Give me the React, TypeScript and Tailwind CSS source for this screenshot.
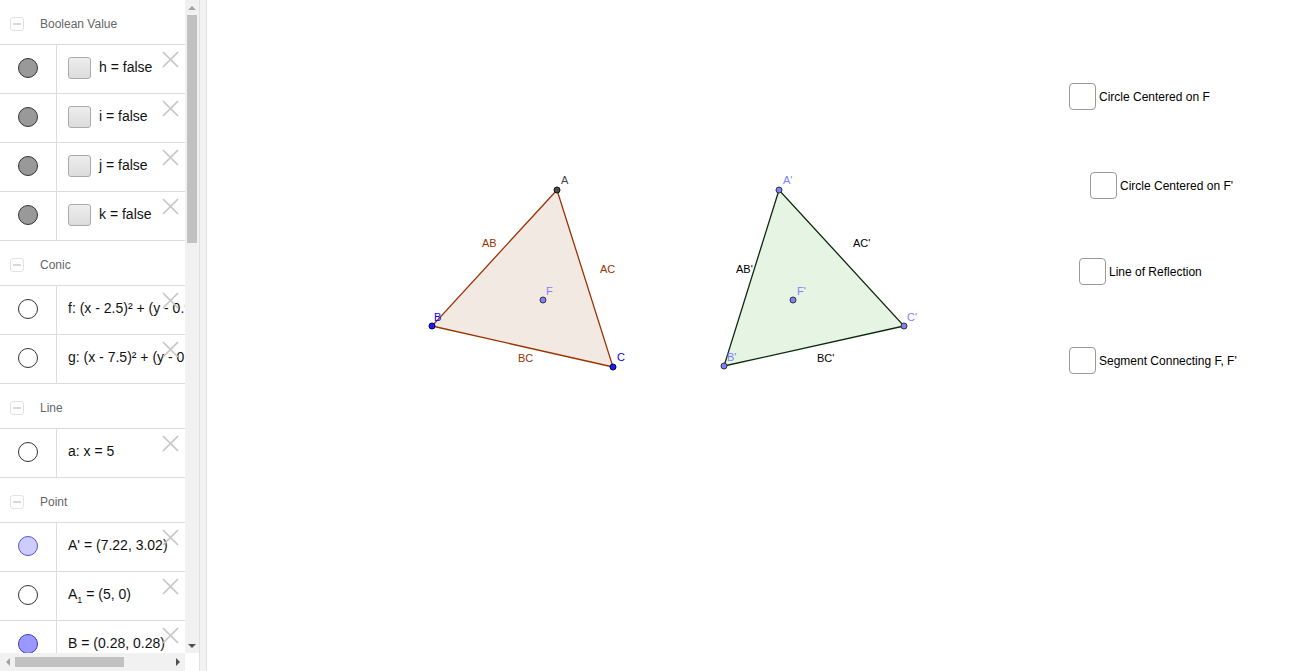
import React from "react";

type Row = {
  kind: "bool" | "open" | "point";
  fill?: string;
  stroke?: string;
  content: React.ReactNode;
};

type Group = { title: string; rows: Row[] };

const groups: Group[] = [
  {
    title: "Boolean Value",
    rows: [
      { kind: "bool", content: "h = false" },
      { kind: "bool", content: "i = false" },
      { kind: "bool", content: "j = false" },
      { kind: "bool", content: "k = false" },
    ],
  },
  {
    title: "Conic",
    rows: [
      { kind: "open", content: "f: (x - 2.5)² + (y - 0.9)² = 0.01" },
      { kind: "open", content: "g: (x - 7.5)² + (y - 0.9)² = 0.01" },
    ],
  },
  {
    title: "Line",
    rows: [{ kind: "open", content: "a: x = 5" }],
  },
  {
    title: "Point",
    rows: [
      { kind: "point", fill: "#ccccff", stroke: "#5555cc", content: "A' = (7.22, 3.02)" },
      {
        kind: "open",
        content: (
          <>
            A<sub className="text-[9px] align-[-2px]">1</sub> = (5, 0)
          </>
        ),
      },
      { kind: "point", fill: "#9999ff", stroke: "#3a3acc", content: "B = (0.28, 0.28)" },
    ],
  },
];

function DeleteX() {
  return (
    <svg className="absolute right-[6px] top-[6px]" width="17" height="17" viewBox="0 0 17 17">
      <path d="M1 1L16 16M16 1L1 16" stroke="#c4c4c4" strokeWidth="1.6" />
    </svg>
  );
}

function Marble({ row }: { row: Row }) {
  if (row.kind === "bool")
    return <div className="w-[20px] h-[20px] rounded-full bg-[#999999] border border-[#333]" />;
  if (row.kind === "point")
    return (
      <div
        className="w-[20px] h-[20px] rounded-full border"
        style={{ background: row.fill, borderColor: row.stroke }}
      />
    );
  return <div className="w-[20px] h-[20px] rounded-full bg-white border border-[#333]" />;
}

function AlgebraRow({ row }: { row: Row }) {
  return (
    <div className="flex h-[49px] border-t border-[#dcdcdc] bg-white">
      <div className="w-[57px] shrink-0 flex items-center justify-center border-r border-[#dcdcdc] pb-[2px]">
        <Marble row={row} />
      </div>
      <div className="relative flex-1 flex items-center pl-[11px] pb-[3px] overflow-hidden whitespace-nowrap text-[14px] text-[#111]">
        {row.kind === "bool" && (
          <div className="w-[23px] h-[22px] mr-[8px] shrink-0 rounded-[3px] border border-[#aaaaaa] bg-gradient-to-b from-[#eeeeee] to-[#dcdcdc]" />
        )}
        <span>{row.content}</span>
        <DeleteX />
      </div>
    </div>
  );
}

function GroupHeader({ title }: { title: string }) {
  return (
    <div className="h-[44px] flex items-center pl-[10px] pt-[3px] bg-white">
      <div className="w-[14px] h-[14px] rounded-[3px] border border-[#e2e2e2] flex items-center justify-center">
        <div className="w-[8px] h-[2px] bg-[#d8d8d8]" />
      </div>
      <span className="ml-[16px] text-[12px] text-[#666]">{title}</span>
    </div>
  );
}

function CanvasCheck({ left, top, label }: { left: number; top: number; label: string }) {
  return (
    <div className="absolute flex items-center" style={{ left, top }}>
      <div className="w-[27px] h-[27px] rounded-[4px] border border-[#999] bg-white" />
      <span className="ml-[3px] text-[12px] leading-none pt-[1px] text-black">{label}</span>
    </div>
  );
}

function Geometry() {
  return (
    <svg
      className="absolute left-0 top-0 font-['Liberation_Sans',Arial,sans-serif]"
      width="1091"
      height="671"
      viewBox="207 0 1091 671"
      fontSize="11"
    >
      <polygon points="557,190 432,326 613,367" fill="#f3e9e3" stroke="#993300" strokeWidth="1.3" />
      <polygon points="779,190 724,366 904,326" fill="#e6f4e4" stroke="#0b2a0b" strokeWidth="1.3" />

      <text x="482" y="247" fill="#993300">AB</text>
      <text x="600" y="273" fill="#993300">AC</text>
      <text x="518" y="362" fill="#993300">BC</text>

      <text x="853" y="247" fill="#000">AC'</text>
      <text x="736" y="273" fill="#000">AB'</text>
      <text x="817" y="362" fill="#000">BC'</text>

      <circle cx="557" cy="190" r="3" fill="#4d4d4d" stroke="#111" strokeWidth="1" />
      <circle cx="432" cy="326" r="3" fill="#1a1aff" stroke="#000044" strokeWidth="1" />
      <circle cx="613" cy="367" r="3" fill="#1a1aff" stroke="#000044" strokeWidth="1" />
      <circle cx="543" cy="300" r="3" fill="#7f7fff" stroke="#333" strokeWidth="1" />

      <text x="561" y="184" fill="#444">A</text>
      <text x="434" y="321" fill="#0000ff">B</text>
      <text x="617" y="361" fill="#0000ff">C</text>
      <text x="546" y="295" fill="#7f7fff">F</text>

      <circle cx="779" cy="190" r="3" fill="#7f7fff" stroke="#333" strokeWidth="1" />
      <circle cx="724" cy="366" r="3" fill="#7f7fff" stroke="#333" strokeWidth="1" />
      <circle cx="904" cy="326" r="3" fill="#7f7fff" stroke="#333" strokeWidth="1" />
      <circle cx="793" cy="300" r="3" fill="#7f7fff" stroke="#333" strokeWidth="1" />

      <text x="783" y="184" fill="#7f7fff">A'</text>
      <text x="727" y="361" fill="#7f7fff">B'</text>
      <text x="907" y="321" fill="#7f7fff">C'</text>
      <text x="797" y="295" fill="#7f7fff">F'</text>
    </svg>
  );
}

export default function App() {
  return (
    <div className="flex w-[1298px] h-[671px] bg-white overflow-hidden font-['Liberation_Sans',Arial,sans-serif]">
      {/* Algebra view */}
      <div className="w-[199px] shrink-0 flex flex-col">
        <div className="flex flex-1 min-h-0">
          <div className="w-[185px] overflow-hidden">
            {groups.map((g) => (
              <div key={g.title} className="border-b border-[#dcdcdc]">
                <GroupHeader title={g.title} />
                {g.rows.map((r, i) => (
                  <AlgebraRow key={i} row={r} />
                ))}
              </div>
            ))}
          </div>
          {/* vertical scrollbar */}
          <div className="w-[14px] bg-[#f1f1f1] flex flex-col items-center">
            <div className="h-[15px] flex items-center justify-center">
              <div className="w-0 h-0 border-l-[4px] border-r-[4px] border-b-[4px] border-l-transparent border-r-transparent border-b-[#a3a3a3]" />
            </div>
            <div className="w-[10px] h-[228px] bg-[#c1c1c1]" />
            <div className="flex-1" />
            <div className="h-[15px] flex items-center justify-center">
              <div className="w-0 h-0 border-l-[4px] border-r-[4px] border-t-[4px] border-l-transparent border-r-transparent border-t-[#505050]" />
            </div>
          </div>
        </div>
        {/* horizontal scrollbar */}
        <div className="h-[18px] flex">
          <div className="w-[185px] bg-[#f1f1f1] flex items-center">
            <div className="w-[15px] flex items-center justify-center">
              <div className="w-0 h-0 border-t-[4px] border-b-[4px] border-r-[4px] border-t-transparent border-b-transparent border-r-[#a3a3a3]" />
            </div>
            <div className="w-[109px] h-[10px] bg-[#c1c1c1]" />
            <div className="flex-1" />
            <div className="w-[15px] flex items-center justify-center">
              <div className="w-0 h-0 border-t-[4px] border-b-[4px] border-l-[4px] border-t-transparent border-b-transparent border-l-[#505050]" />
            </div>
          </div>
          <div className="flex-1 bg-white" />
        </div>
      </div>

      {/* Splitter */}
      <div className="w-[8px] shrink-0 bg-[#f3f3f3] border-l border-r border-[#e0e0e0]" />

      {/* Graphics view */}
      <div className="relative flex-1">
        <Geometry />
        <CanvasCheck left={862} top={83} label="Circle Centered on F" />
        <CanvasCheck left={883} top={172} label="Circle Centered on F'" />
        <CanvasCheck left={872} top={258} label="Line of Reflection" />
        <CanvasCheck left={862} top={347} label="Segment Connecting F, F'" />
      </div>
    </div>
  );
}
